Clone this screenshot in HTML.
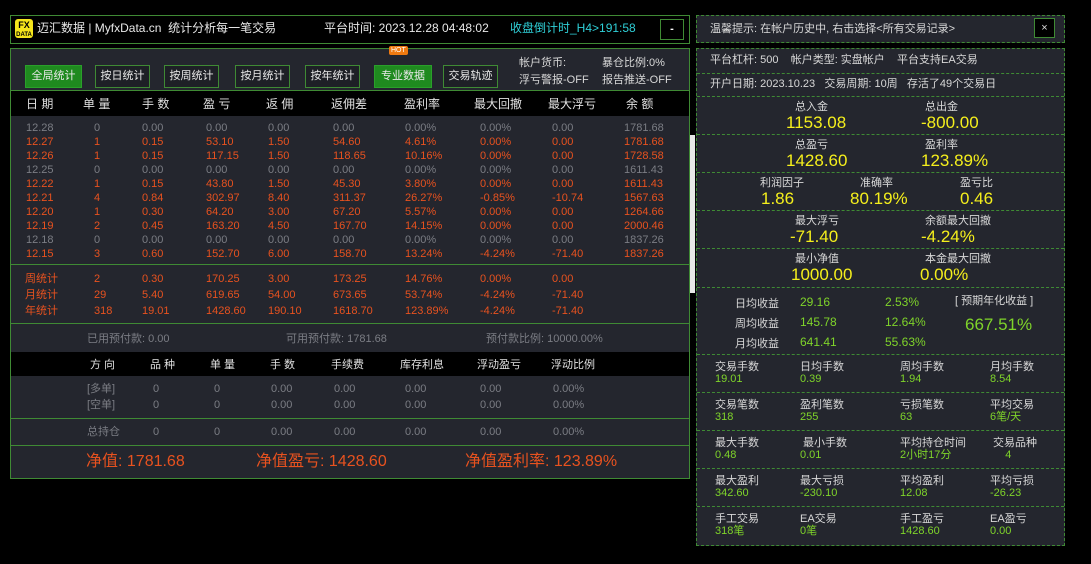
<!DOCTYPE html>
<html><head><meta charset="utf-8"><style>
*{margin:0;padding:0;box-sizing:border-box}
body{width:1091px;height:564px;background:#000;position:relative;overflow:hidden;font-family:"Liberation Sans","Noto Sans CJK SC",sans-serif;font-size:11px;color:#d8d8d8;line-height:14px}
.a{position:absolute;white-space:nowrap}
.box{position:absolute;border:1px solid #3f8a34;background:#24262e}
.dbox{position:absolute;border:1px dashed #3f8a34;background:#24262e}
.hl{position:absolute;height:1px;background:#3f8a34}
.dl{position:absolute;height:0;border-top:1px dashed #3f8a34}
.btn{position:absolute;top:65px;height:23px;border:1px solid #3f8a34;background:#1e2026;color:#e8e8e8;font-size:11px;line-height:21px;text-align:center}
.btn.on{background:#1f8a1f;border-color:#2aa02a}
.r{color:#e8521f}.g{color:#7b7d84}.y{color:#f5ef1c}.lg{color:#7fd42a}
.big{font-size:17px;line-height:18px}
</style></head><body>
<!-- header -->
<div class="box" style="left:10px;top:15px;width:680px;height:29px;background:#000"></div>
<div class="a" style="left:15px;top:19px;width:18px;height:19px;background:#f5e51c;border-radius:3px;color:#000;font-weight:bold;font-size:9px;line-height:8px;text-align:center;padding-top:2px">FX<br><span style="font-size:6px">DATA</span></div>
<div class="a" style="left:37px;top:21px;font-size:12px;color:#e8e8e8">迈汇数据 | MyfxData.cn&nbsp; 统计分析每一笔交易</div>
<div class="a" style="left:324px;top:21px;font-size:12px;color:#e8e8e8">平台时间: 2023.12.28 04:48:02</div>
<div class="a" style="left:510px;top:21px;font-size:12px;color:#2fd0d8">收盘倒计时_H4&gt;191:58</div>
<div class="a" style="left:660px;top:19px;width:24px;height:21px;border:1px solid #3f8a34;color:#fff;text-align:center;line-height:18px;font-weight:bold">-</div>

<!-- main -->
<div class="box" style="left:10px;top:48px;width:680px;height:431px"></div>
<div class="btn on" style="left:25px;width:57px">全局统计</div>
<div class="btn" style="left:95px;width:55px">按日统计</div>
<div class="btn" style="left:164px;width:55px">按周统计</div>
<div class="btn" style="left:235px;width:55px">按月统计</div>
<div class="btn" style="left:305px;width:55px">按年统计</div>
<div class="btn on" style="left:374px;width:58px">专业数据</div>
<div class="btn" style="left:443px;width:55px">交易轨迹</div>
<div class="a" style="left:389px;top:46px;background:#f07a10;color:#fff;font-size:7px;padding:0 2px;line-height:9px;border-radius:2px">HOT</div>
<div class="a" style="left:519px;top:55px;line-height:17px">帐户货币:<br>浮亏警报-OFF</div>
<div class="a" style="left:602px;top:55px;line-height:17px">暴仓比例:0%<br>报告推送-OFF</div>
<div class="hl" style="left:11px;top:90px;width:678px"></div>
<div class="a" style="left:11px;top:91px;width:678px;height:25px;background:#000"></div>
<div class="a" style="top:97px;left:26px;font-size:12px;color:#e0e0e0">日 期</div>
<div class="a" style="top:97px;left:83px;font-size:12px;color:#e0e0e0">单 量</div>
<div class="a" style="top:97px;left:142px;font-size:12px;color:#e0e0e0">手 数</div>
<div class="a" style="top:97px;left:203px;font-size:12px;color:#e0e0e0">盈 亏</div>
<div class="a" style="top:97px;left:266px;font-size:12px;color:#e0e0e0">返 佣</div>
<div class="a" style="top:97px;left:331px;font-size:12px;color:#e0e0e0">返佣差</div>
<div class="a" style="top:97px;left:404px;font-size:12px;color:#e0e0e0">盈利率</div>
<div class="a" style="top:97px;left:474px;font-size:12px;color:#e0e0e0">最大回撤</div>
<div class="a" style="top:97px;left:548px;font-size:12px;color:#e0e0e0">最大浮亏</div>
<div class="a" style="top:97px;left:626px;font-size:12px;color:#e0e0e0">余 额</div>

<div class="a g" style="left:26px;top:121px;line-height:14px"><span class="g">12.28</span><br><span class="r">12.27</span><br><span class="r">12.26</span><br>12.25<br><span class="r">12.22</span><br><span class="r">12.21</span><br><span class="r">12.20</span><br><span class="r">12.19</span><br>12.18<br><span class="r">12.15</span></div>
<div class="a g" style="left:94px;top:121px;line-height:14px">0<br><span class="r">1</span><br><span class="r">1</span><br>0<br><span class="r">1</span><br><span class="r">4</span><br><span class="r">1</span><br><span class="r">2</span><br>0<br><span class="r">3</span></div>
<div class="a g" style="left:142px;top:121px;line-height:14px">0.00<br><span class="r">0.15</span><br><span class="r">0.15</span><br>0.00<br><span class="r">0.15</span><br><span class="r">0.84</span><br><span class="r">0.30</span><br><span class="r">0.45</span><br>0.00<br><span class="r">0.60</span></div>
<div class="a g" style="left:206px;top:121px;line-height:14px">0.00<br><span class="r">53.10</span><br><span class="r">117.15</span><br>0.00<br><span class="r">43.80</span><br><span class="r">302.97</span><br><span class="r">64.20</span><br><span class="r">163.20</span><br>0.00<br><span class="r">152.70</span></div>
<div class="a g" style="left:268px;top:121px;line-height:14px">0.00<br><span class="r">1.50</span><br><span class="r">1.50</span><br>0.00<br><span class="r">1.50</span><br><span class="r">8.40</span><br><span class="r">3.00</span><br><span class="r">4.50</span><br>0.00<br><span class="r">6.00</span></div>
<div class="a g" style="left:333px;top:121px;line-height:14px">0.00<br><span class="r">54.60</span><br><span class="r">118.65</span><br>0.00<br><span class="r">45.30</span><br><span class="r">311.37</span><br><span class="r">67.20</span><br><span class="r">167.70</span><br>0.00<br><span class="r">158.70</span></div>
<div class="a g" style="left:405px;top:121px;line-height:14px">0.00%<br><span class="r">4.61%</span><br><span class="r">10.16%</span><br>0.00%<br><span class="r">3.80%</span><br><span class="r">26.27%</span><br><span class="r">5.57%</span><br><span class="r">14.15%</span><br>0.00%<br><span class="r">13.24%</span></div>
<div class="a g" style="left:480px;top:121px;line-height:14px">0.00%<br><span class="r">0.00%</span><br><span class="r">0.00%</span><br>0.00%<br><span class="r">0.00%</span><br><span class="r">-0.85%</span><br><span class="r">0.00%</span><br><span class="r">0.00%</span><br>0.00%<br><span class="r">-4.24%</span></div>
<div class="a g" style="left:552px;top:121px;line-height:14px">0.00<br><span class="r">0.00</span><br><span class="r">0.00</span><br>0.00<br><span class="r">0.00</span><br><span class="r">-10.74</span><br><span class="r">0.00</span><br><span class="r">0.00</span><br>0.00<br><span class="r">-71.40</span></div>
<div class="a g" style="left:624px;top:121px;line-height:14px">1781.68<br><span class="r">1781.68</span><br><span class="r">1728.58</span><br>1611.43<br><span class="r">1611.43</span><br><span class="r">1567.63</span><br><span class="r">1264.66</span><br><span class="r">2000.46</span><br>1837.26<br><span class="r">1837.26</span></div>

<div class="hl" style="left:11px;top:264px;width:678px"></div>
<div class="a r" style="left:25px;top:271px;line-height:16px">周统计<br>月统计<br>年统计</div>
<div class="a r" style="left:94px;top:271px;line-height:16px">2<br>29<br>318</div>
<div class="a r" style="left:142px;top:271px;line-height:16px">0.30<br>5.40<br>19.01</div>
<div class="a r" style="left:206px;top:271px;line-height:16px">170.25<br>619.65<br>1428.60</div>
<div class="a r" style="left:268px;top:271px;line-height:16px">3.00<br>54.00<br>190.10</div>
<div class="a r" style="left:333px;top:271px;line-height:16px">173.25<br>673.65<br>1618.70</div>
<div class="a r" style="left:405px;top:271px;line-height:16px">14.76%<br>53.74%<br>123.89%</div>
<div class="a r" style="left:480px;top:271px;line-height:16px">0.00%<br>-4.24%<br>-4.24%</div>
<div class="a r" style="left:552px;top:271px;line-height:16px">0.00<br>-71.40<br>-71.40</div>
<div class="hl" style="left:11px;top:323px;width:678px"></div>
<div class="a g" style="left:87px;top:332px">已用预付款: 0.00</div>
<div class="a g" style="left:286px;top:332px">可用预付款: 1781.68</div>
<div class="a g" style="left:486px;top:332px">预付款比例: 10000.00%</div>
<div class="a" style="left:11px;top:352px;width:678px;height:24px;background:#000"></div>
<div class="a" style="top:358px;left:90px;color:#e0e0e0">方 向</div>
<div class="a" style="top:358px;left:150px;color:#e0e0e0">品 种</div>
<div class="a" style="top:358px;left:210px;color:#e0e0e0">单 量</div>
<div class="a" style="top:358px;left:270px;color:#e0e0e0">手 数</div>
<div class="a" style="top:358px;left:331px;color:#e0e0e0">手续费</div>
<div class="a" style="top:358px;left:400px;color:#e0e0e0">库存利息</div>
<div class="a" style="top:358px;left:477px;color:#e0e0e0">浮动盈亏</div>
<div class="a" style="top:358px;left:551px;color:#e0e0e0">浮动比例</div>
<div class="a g" style="left:87px;top:381px;line-height:16px">[多单]<br>[空单]</div>
<div class="a g" style="left:153px;top:381px;line-height:16px">0<br>0</div>
<div class="a g" style="left:214px;top:381px;line-height:16px">0<br>0</div>
<div class="a g" style="left:271px;top:381px;line-height:16px">0.00<br>0.00</div>
<div class="a g" style="left:334px;top:381px;line-height:16px">0.00<br>0.00</div>
<div class="a g" style="left:405px;top:381px;line-height:16px">0.00<br>0.00</div>
<div class="a g" style="left:480px;top:381px;line-height:16px">0.00<br>0.00</div>
<div class="a g" style="left:553px;top:381px;line-height:16px">0.00%<br>0.00%</div>
<div class="hl" style="left:11px;top:418px;width:678px"></div>
<div class="a g" style="left:87px;top:425px;line-height:14px">总持仓</div>
<div class="a g" style="left:153px;top:425px">0</div>
<div class="a g" style="left:214px;top:425px">0</div>
<div class="a g" style="left:271px;top:425px">0.00</div>
<div class="a g" style="left:334px;top:425px">0.00</div>
<div class="a g" style="left:405px;top:425px">0.00</div>
<div class="a g" style="left:480px;top:425px">0.00</div>
<div class="a g" style="left:553px;top:425px">0.00%</div>
<div class="hl" style="left:11px;top:445px;width:678px"></div>
<div class="a r" style="left:86px;top:452px;font-size:16px;line-height:20px">净值: 1781.68</div>
<div class="a r" style="left:256px;top:452px;font-size:16px;line-height:20px">净值盈亏: 1428.60</div>
<div class="a r" style="left:465px;top:452px;font-size:16px;line-height:20px">净值盈利率: 123.89%</div>

<div class="a" style="left:690px;top:135px;width:5px;height:158px;background:#e8e8e8"></div>

<!-- right -->
<div class="dbox" style="left:696px;top:15px;width:369px;height:28px"></div>
<div class="a" style="left:710px;top:22px">温馨提示: 在帐户历史中, 右击选择&lt;所有交易记录&gt;</div>
<div class="a" style="left:1034px;top:18px;width:21px;height:20px;border:1px solid #3f8a34;background:#000;color:#ddd;text-align:center;line-height:18px">×</div>

<div class="dbox" style="left:696px;top:48px;width:369px;height:498px"></div>
<div class="a" style="left:710px;top:53px">平台杠杆: 500&nbsp;&nbsp;&nbsp; 帐户类型: 实盘帐户&nbsp;&nbsp;&nbsp; 平台支持EA交易</div>
<div class="dl" style="left:697px;top:73px;width:367px"></div>
<div class="a" style="left:710px;top:77px">开户日期: 2023.10.23&nbsp;&nbsp; 交易周期: 10周&nbsp;&nbsp; 存活了49个交易日</div>
<div class="dl" style="left:697px;top:96px;width:367px"></div>
<div class="a" style="left:795px;top:100px">总入金</div><div class="a" style="left:925px;top:100px">总出金</div>
<div class="a y big" style="left:786px;top:114px">1153.08</div><div class="a y big" style="left:921px;top:114px">-800.00</div>
<div class="dl" style="left:697px;top:134px;width:367px"></div>
<div class="a" style="left:795px;top:138px">总盈亏</div><div class="a" style="left:925px;top:138px">盈利率</div>
<div class="a y big" style="left:786px;top:152px">1428.60</div><div class="a y big" style="left:921px;top:152px">123.89%</div>
<div class="dl" style="left:697px;top:172px;width:367px"></div>
<div class="a" style="left:760px;top:176px">利润因子</div><div class="a" style="left:860px;top:176px">准确率</div><div class="a" style="left:960px;top:176px">盈亏比</div>
<div class="a y big" style="left:761px;top:190px">1.86</div><div class="a y big" style="left:850px;top:190px">80.19%</div><div class="a y big" style="left:960px;top:190px">0.46</div>
<div class="dl" style="left:697px;top:210px;width:367px"></div>
<div class="a" style="left:795px;top:214px">最大浮亏</div><div class="a" style="left:925px;top:214px">余额最大回撤</div>
<div class="a y big" style="left:790px;top:228px">-71.40</div><div class="a y big" style="left:921px;top:228px">-4.24%</div>
<div class="dl" style="left:697px;top:248px;width:367px"></div>
<div class="a" style="left:795px;top:252px">最小净值</div><div class="a" style="left:925px;top:252px">本金最大回撤</div>
<div class="a y big" style="left:791px;top:266px">1000.00</div><div class="a y big" style="left:920px;top:266px">0.00%</div>
<div class="dl" style="left:697px;top:287px;width:367px"></div>
<div class="a" style="left:735px;top:294px;line-height:20px">日均收益<br>周均收益<br>月均收益</div>
<div class="a lg" style="left:800px;top:292px;line-height:20px;font-size:12px">29.16<br>145.78<br>641.41</div>
<div class="a lg" style="left:885px;top:292px;line-height:20px;font-size:12px">2.53%<br>12.64%<br>55.63%</div>
<div class="a" style="left:955px;top:294px">[ 预期年化收益 ]</div>
<div class="a lg" style="left:965px;top:315px;font-size:17px;line-height:20px">667.51%</div>
<div class="dl" style="left:697px;top:354px;width:367px"></div>

<div class="a" style="left:715px;top:361px;line-height:12px">交易手数<br><span class="lg">19.01</span></div>
<div class="a" style="left:800px;top:361px;line-height:12px">日均手数<br><span class="lg">0.39</span></div>
<div class="a" style="left:900px;top:361px;line-height:12px">周均手数<br><span class="lg">1.94</span></div>
<div class="a" style="left:990px;top:361px;line-height:12px">月均手数<br><span class="lg">8.54</span></div>
<div class="dl" style="left:697px;top:392px;width:367px"></div>
<div class="a" style="left:715px;top:399px;line-height:12px">交易笔数<br><span class="lg">318</span></div>
<div class="a" style="left:800px;top:399px;line-height:12px">盈利笔数<br><span class="lg">255</span></div>
<div class="a" style="left:900px;top:399px;line-height:12px">亏损笔数<br><span class="lg">63</span></div>
<div class="a" style="left:990px;top:399px;line-height:12px">平均交易<br><span class="lg">6笔/天</span></div>
<div class="dl" style="left:697px;top:430px;width:367px"></div>
<div class="a" style="left:715px;top:437px;line-height:12px">最大手数<br><span class="lg">0.48</span></div>
<div class="a" style="left:800px;top:437px;line-height:12px">&nbsp;最小手数<br><span class="lg">0.01</span></div>
<div class="a" style="left:900px;top:437px;line-height:12px">平均持仓时间<br><span class="lg">2小时17分</span></div>
<div class="a" style="left:993px;top:437px;line-height:12px">交易品种<br><span class="lg">&nbsp;&nbsp;&nbsp;&nbsp;4</span></div>
<div class="dl" style="left:697px;top:468px;width:367px"></div>
<div class="a" style="left:715px;top:475px;line-height:12px">最大盈利<br><span class="lg">342.60</span></div>
<div class="a" style="left:800px;top:475px;line-height:12px">最大亏损<br><span class="lg">-230.10</span></div>
<div class="a" style="left:900px;top:475px;line-height:12px">平均盈利<br><span class="lg">12.08</span></div>
<div class="a" style="left:990px;top:475px;line-height:12px">平均亏损<br><span class="lg">-26.23</span></div>
<div class="dl" style="left:697px;top:506px;width:367px"></div>
<div class="a" style="left:715px;top:513px;line-height:12px">手工交易<br><span class="lg">318笔</span></div>
<div class="a" style="left:800px;top:513px;line-height:12px">EA交易<br><span class="lg">0笔</span></div>
<div class="a" style="left:900px;top:513px;line-height:12px">手工盈亏<br><span class="lg">1428.60</span></div>
<div class="a" style="left:990px;top:513px;line-height:12px">EA盈亏<br><span class="lg">0.00</span></div>
</body></html>
